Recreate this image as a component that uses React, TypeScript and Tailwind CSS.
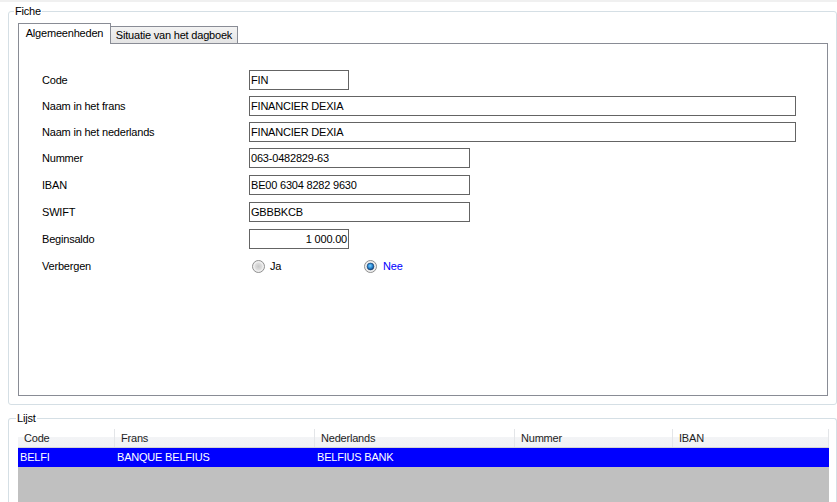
import React from "react";

function Radio({ checked, id }: { checked?: boolean; id: string }) {
  return (
    <svg width="13" height="13" viewBox="0 0 13 13" className="block shrink-0">
      <defs>
        <radialGradient id={`rg-${id}`} cx="50%" cy="50%" r="60%">
          <stop offset="0%" stopColor="#c8c8c8" />
          <stop offset="60%" stopColor="#e4e4e4" />
          <stop offset="100%" stopColor="#f6f6f6" />
        </radialGradient>
        <radialGradient id={`rb-${id}`} cx="45%" cy="40%" r="60%">
          <stop offset="0%" stopColor="#7fd0ff" />
          <stop offset="55%" stopColor="#2a8ad4" />
          <stop offset="100%" stopColor="#0f3f7c" />
        </radialGradient>
      </defs>
      <circle cx="6.5" cy="6.5" r="6" fill={`url(#rg-${id})`} stroke="#8f8f8f" strokeWidth="1" />
      <circle cx="6.5" cy="6.5" r="4.6" fill="none" stroke="#ffffff" strokeOpacity="0.6" strokeWidth="0.8" />
      {checked && <circle cx="6.5" cy="6.5" r="3.4" fill={`url(#rb-${id})`} stroke="#1a3f6e" strokeWidth="0.6" />}
    </svg>
  );
}

type Row = { label: string; value: string; w: string; mt: string; right?: boolean };

const rows: Row[] = [
  { label: "Code", value: "FIN", w: "w-[100px]", mt: "mt-0" },
  { label: "Naam in het frans", value: "FINANCIER DEXIA", w: "w-[547px]", mt: "mt-[6px]" },
  { label: "Naam in het nederlands", value: "FINANCIER DEXIA", w: "w-[547px]", mt: "mt-[6px]" },
  { label: "Nummer", value: "063-0482829-63", w: "w-[221px]", mt: "mt-[6px]" },
  { label: "IBAN", value: "BE00 6304 8282 9630", w: "w-[221px]", mt: "mt-[7px]" },
  { label: "SWIFT", value: "GBBBKCB", w: "w-[221px]", mt: "mt-[7px]" },
  { label: "Beginsaldo", value: "1 000.00", w: "w-[100px]", mt: "mt-[7px]", right: true },
];

export default function App() {
  return (
    <div className="w-[837px] h-[502px] overflow-hidden bg-white font-['Liberation_Sans',Arial,sans-serif] text-[11px] tracking-[-0.2px] text-black leading-none">
      <div className="h-[2px] bg-[#f0f0f0]" />

      {/* Fiche group */}
      <div className="relative mt-[9px] ml-[8px] w-[829px] h-[394px] border border-[#d5dfe5] rounded-[3px] pt-[11px] pl-[9px]">
        <span className="absolute left-[5px] top-[-7px] bg-white px-[1px] leading-[13px]">Fiche</span>

        <div className="flex items-end h-[20px]">
          <div className="relative z-10 -mb-px w-[93px] h-[21px] bg-white border-t border-l border-r border-[#898c95] flex items-center justify-center pb-[1px]">
            Algemeenheden
          </div>
          <div className="w-[127px] h-[17px] bg-[linear-gradient(to_bottom,#f3f3f3,#e4e4e4)] border-t border-r border-[#898c95] flex items-center justify-center">
            Situatie van het dagboek
          </div>
        </div>

        <div className="w-[810px] h-[353px] border border-[#898c95] bg-white pt-[26px] pl-[23px]">
          {rows.map((r) => (
            <div key={r.label} className={`flex items-center h-[20px] ${r.mt}`}>
              <div className="w-[207px]">{r.label}</div>
              <div
                className={`${r.w} h-[20px] border border-[#646464] flex items-center ${
                  r.right ? "justify-end pr-[1px]" : "pl-[1px]"
                }`}
              >
                {r.value}
              </div>
            </div>
          ))}
          <div className="flex items-center h-[13px] mt-[11px]">
            <div className="w-[207px]">Verbergen</div>
            <div className="flex items-center w-[115px] pl-[3px]">
              <Radio id="ja" />
              <span className="ml-[5px]">Ja</span>
            </div>
            <div className="flex items-center">
              <Radio id="nee" checked />
              <span className="ml-[6px] text-[#0000ff]">Nee</span>
            </div>
          </div>
        </div>
      </div>

      {/* Lijst group */}
      <div className="relative mt-[13px] ml-[8px] w-[829px] h-[90px] border border-b-0 border-[#d5dfe5] rounded-t-[3px] pt-[10px] pl-[9px]">
        <span className="absolute left-[7px] top-[-7px] bg-white px-[1px] leading-[13px]">Lijst</span>
        <div className="w-[811px] h-full flex flex-col">
          <div className="flex h-[19px] border-b border-[#d5d5d5] bg-[linear-gradient(to_bottom,#ffffff_0%,#ffffff_45%,#f3f4f6_46%,#f1f2f4_100%)] text-[#1e1e1e]">
            <div className="w-[96px] pl-[6px] flex items-center">Code</div>
            <div className="w-[200px] pl-[6px] flex items-center border-l border-[#e3e5e8]">Frans</div>
            <div className="w-[200px] pl-[6px] flex items-center border-l border-[#e3e5e8]">Nederlands</div>
            <div className="w-[158px] pl-[6px] flex items-center border-l border-[#e3e5e8]">Nummer</div>
            <div className="w-[157px] pl-[6px] flex items-center border-l border-r border-[#e3e5e8]">IBAN</div>
          </div>
          <div className="flex h-[19px] bg-[#0000ff] text-white">
            <div className="w-[96px] pl-[2px] flex items-center">BELFI</div>
            <div className="w-[200px] pl-[3px] flex items-center">BANQUE BELFIUS</div>
            <div className="w-[200px] pl-[3px] flex items-center">BELFIUS BANK</div>
            <div className="w-[158px]" />
            <div className="w-[157px]" />
          </div>
          <div className="flex-1 bg-[#c0c0c0]" />
        </div>
      </div>
    </div>
  );
}
